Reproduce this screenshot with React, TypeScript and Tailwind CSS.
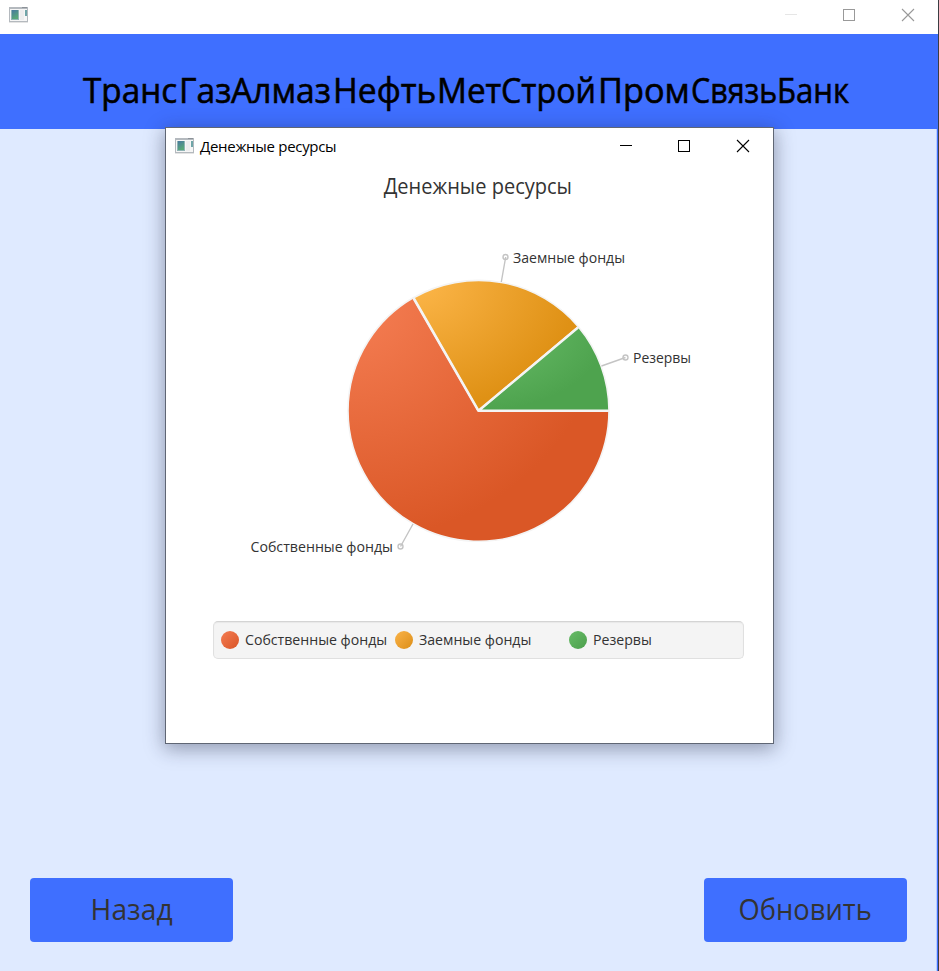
const UI = "font-['Open_Sans','Noto_Sans',sans-serif]";

function AppIcon({ className }: { className?: string }) {
  return (
    <svg width="19" height="16" viewBox="0 0 19 16" className={className} shapeRendering="crispEdges">
      <defs>
        <linearGradient id="pane" x1="0" y1="0" x2="0.4" y2="1">
          <stop offset="0" stopColor="#4878a0" />
          <stop offset="1" stopColor="#58a878" />
        </linearGradient>
      </defs>
      <rect width="19" height="15" fill="#b4b9be" />
      <rect y="15" width="19" height="1" fill="#e4e4e4" />
      <rect x="1" y="2" width="17" height="12" fill="#f6f6f6" />
      <rect x="2" y="3" width="8" height="10" fill="#8fb4b4" />
      <rect x="3" y="3" width="6" height="9" fill="url(#pane)" />
      <rect x="11" y="3" width="4" height="10" fill="#ededee" />
      <rect x="16" y="3" width="2" height="6" fill="#6fa5a8" />
      <rect x="13" y="0" width="5" height="1" fill="#8c9298" />
    </svg>
  );
}

function WindowButtons({ color, dash }: { color: string; dash: string }) {
  return (
    <svg width="132" height="14" viewBox="0 0 132 14" fill="none" className="block shrink-0">
      <path d="M1 6.5h12" stroke={dash} />
      <rect x="59.5" y="1.5" width="11" height="11" stroke={color} />
      <path d="M118 1l12 12M130 1l-12 12" stroke={color} strokeWidth="1.1" />
    </svg>
  );
}

function PieChart() {
  return (
    <svg width="607" height="360" viewBox="166 220 607 360" className="block">
      <defs>
        <radialGradient id="own" cx="0" cy="0" r="1">
          <stop offset="0" stopColor="#f67f55" />
          <stop offset="1" stopColor="#da5726" />
        </radialGradient>
        <radialGradient id="loan" cx="0" cy="0" r="1">
          <stop offset="0" stopColor="#fdb74b" />
          <stop offset="1" stopColor="#df9115" />
        </radialGradient>
        <radialGradient id="reserve" cx="0" cy="0" r="1">
          <stop offset="0" stopColor="#6cc06c" />
          <stop offset="1" stopColor="#4ea34e" />
        </radialGradient>
      </defs>
      <g stroke="#f4f4f4" strokeWidth="1.6" strokeLinejoin="bevel">
        <path d="M478.5 410.8H609A130.5 130.5 0 1 1 413.2 297.8Z" fill="url(#own)" />
        <path d="M478.5 410.8L413.6 297.8A130.5 130.5 0 0 1 578.5 326.9Z" fill="url(#loan)" />
        <path d="M478.5 410.8L578.5 326.9A130.5 130.5 0 0 1 609 410.8Z" fill="url(#reserve)" />
        <path d="M608.5 410.8H478.5L413.8 298.5M478.5 410.8L578 327.4" fill="none" strokeWidth="2.6" />
      </g>
      <g stroke="#c4c4c4" strokeWidth="1.4" fill="none">
        <path d="M501.3 282L505.7 257M601.5 366L625.5 357.5M413 524L400.5 546.5" />
        <circle cx="505.5" cy="257" r="2.5" />
        <circle cx="625.5" cy="357.5" r="2.5" />
        <circle cx="400.5" cy="546.5" r="2.5" />
      </g>
      <g fill="#333" fontSize="15" fontFamily="'Open Sans','Noto Sans',sans-serif">
        <text x="513" y="263" textLength="112" lengthAdjust="spacingAndGlyphs">Заемные фонды</text>
        <text x="633" y="363" textLength="58" lengthAdjust="spacingAndGlyphs">Резервы</text>
        <text x="250.5" y="552" textLength="142.5" lengthAdjust="spacingAndGlyphs">Собственные фонды</text>
      </g>
    </svg>
  );
}

const legend = [
  { name: "Собственные фонды", dot: "bg-linear-to-br from-[#f47c52] to-[#d95424]" },
  { name: "Заемные фонды", dot: "bg-linear-to-br from-[#fab347] to-[#dc8e12]" },
  { name: "Резервы", dot: "bg-linear-to-br from-[#68bc68] to-[#4b9f4b]" },
];

function ResourcesDialog() {
  return (
    <section className={`absolute left-[165px] top-[127px] flex h-[617px] w-[609px] flex-col border border-[#5f6674] bg-white shadow-[0_4px_18px_1px_rgba(30,35,60,0.4)] ${UI}`}>
      <header className="flex h-9 shrink-0 items-center pl-[9px] pr-[22px]">
        <AppIcon />
        <span className="ml-[6px] flex-1 whitespace-nowrap pb-px text-[15px] leading-5 tracking-[-0.3px] text-black">Денежные ресурсы</span>
        <WindowButtons color="#000" dash="#000" />
      </header>
      <h2 className="h-14 shrink-0 whitespace-nowrap pl-[17px] pt-[7px] text-center text-[21px] leading-[30px] text-[#333]">
        <span className="inline-block scale-x-[0.953]">Денежные ресурсы</span>
      </h2>
      <PieChart />
      <div className="ml-[46.5px] mt-[41px] flex h-[38px] w-[531px] items-center rounded-[5px] border border-[#e0e0e0] border-t-[#d4d4d4] bg-[#f4f4f4] pl-[7.5px] shadow-[inset_0_1px_1px_rgba(0,0,0,0.05)]">
        {legend.map((item) => (
          <div key={item.name} className="flex w-[174px] items-center gap-[6px]">
            <i className={`size-[18px] shrink-0 rounded-full ${item.dot}`} />
            <span className="origin-left scale-x-[0.942] whitespace-nowrap pb-[2px] text-[15px] leading-5 text-[#333]">{item.name}</span>
          </div>
        ))}
      </div>
    </section>
  );
}

function ActionButton({ label, className }: { label: string; className: string }) {
  return (
    <button className={`h-16 w-[203px] whitespace-nowrap rounded-[4px] bg-[#3f6fff] pb-[2px] text-[30px] leading-none text-[#333] ${UI}`}>
      <span className={`inline-block ${className}`}>{label}</span>
    </button>
  );
}

const bankName = [
  { part: "Транс", box: "w-[96px]", fit: "scale-x-[0.95]" },
  { part: "Газ", box: "w-[52px]", fit: "scale-x-[0.96]" },
  { part: "Алмаз", box: "w-[102px]", fit: "scale-x-[0.96]" },
  { part: "Нефть", box: "w-[104px]", fit: "scale-x-[0.96]" },
  { part: "Мет", box: "w-[64px]", fit: "scale-x-[0.95]" },
  { part: "Строй", box: "w-[97px]", fit: "scale-x-[0.92]" },
  { part: "Пром", box: "w-[93px]", fit: "scale-x-[0.98]" },
  { part: "Связь", box: "w-[86px]", fit: "scale-x-[0.87]" },
  { part: "Банк", box: "w-[72px]", fit: "scale-x-[0.89]" },
];

export default function App() {
  return (
    <div className="relative flex h-[971px] w-[939px] flex-col overflow-hidden border-r border-[#3a3d42] bg-[#dfeaff]">
      <header className="flex h-[34px] shrink-0 items-start bg-white pl-[9px] pr-[21px] pt-[7px]">
        <AppIcon className="mr-auto" />
        <div className="pr-px pt-[1px]">
          <WindowButtons color="#999" dash="#e6e6e6" />
        </div>
      </header>
      <div className="flex h-[95px] shrink-0 bg-[#3f6fff] pl-[83px] pt-[34px]">
        <h1 className="flex whitespace-nowrap font-['Comic_Sans_MS','Comic_Neue','Open_Sans',sans-serif] text-[35px] leading-[48px] text-black [-webkit-text-stroke:0.6px_black]">
          {bankName.map(({ part, box, fit }) => (
            <span key={part} className={box}>
              <span className={`inline-block origin-left ${fit}`}>{part}</span>
            </span>
          ))}
        </h1>
      </div>
      <main className="flex flex-1 items-end justify-between border-r border-[#3f6fff] pb-[29px] pl-[30px] pr-[30px] shadow-[inset_-1px_0_0_#b9cdff]">
        <ActionButton label="Назад" className="scale-x-[0.94]" />
        <ActionButton label="Обновить" className="scale-x-[0.91]" />
      </main>
      <ResourcesDialog />
    </div>
  );
}
